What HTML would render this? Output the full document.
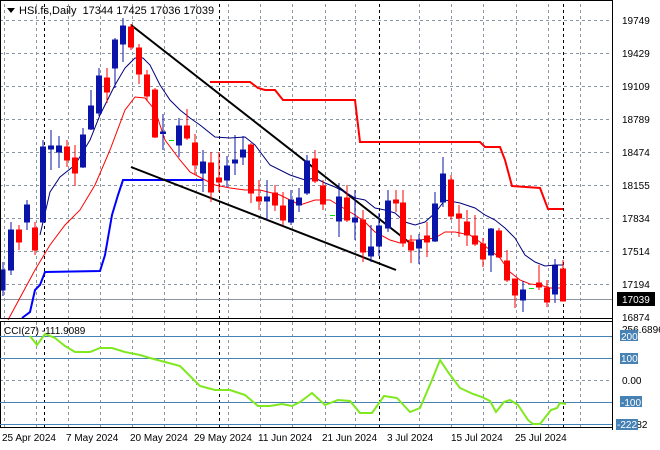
<!DOCTYPE html>
<html><head><meta charset="utf-8"><style>
html,body{margin:0;padding:0;background:#fff;}
svg{display:block;font-family:"Liberation Sans",sans-serif;}
</style></head><body>
<svg width="660" height="450" viewBox="0 0 660 450" xmlns="http://www.w3.org/2000/svg">
<rect width="660" height="450" fill="#fff"/>
<g stroke="#8a96a4" stroke-width="1" stroke-dasharray="3,3" fill="none">
<path d="M0 20.5H612M0 53.5H612M0 86.5H612M0 119.5H612M0 152.5H612M0 185.5H612M0 218.5H612M0 251.5H612M0 284.5H612"/>
<path d="M4.5 4V318M36.5 4V318M68.5 4V318M100.5 4V318M132.5 4V318M164.5 4V318M196.5 4V318M228.5 4V318M260.5 4V318M292.5 4V318M325.5 4V318M355.5 4V318M419.5 4V318M451.5 4V318M483.5 4V318M516.5 4V318M548.5 4V318M580.5 4V318"/>
<path d="M4.5 322V428M36.5 322V428M68.5 322V428M100.5 322V428M132.5 322V428M164.5 322V428M196.5 322V428M228.5 322V428M260.5 322V428M292.5 322V428M325.5 322V428M355.5 322V428M419.5 322V428M451.5 322V428M483.5 322V428M516.5 322V428M548.5 322V428M580.5 322V428"/>
<path d="M0 380.5H612"/>
</g>
<g stroke="#000" stroke-width="1" stroke-dasharray="3,3">
<path d="M44.5 4V318M219.5 4V318M379.5 4V318M563.5 4V318M44.5 322V428M219.5 322V428M379.5 322V428M563.5 322V428"/>
</g>
<line x1="0" y1="299.5" x2="612" y2="299.5" stroke="#8a96a4"/>
<polyline fill="none" stroke="#ff0000" stroke-width="2" points="210,82 250,82 258,88 265,90 275,90 283,100 355,100 360,142 480,142 485,147 500,147 505,160 512,186 540,188 548,209 563,209"/>
<polyline fill="none" stroke="#0000ff" stroke-width="2" points="22,318 30,312 35,290 40,285 45,272 100,271 105,255 112,215 118,195 123,180 203,180"/>
<line x1="131" y1="25" x2="410" y2="243" stroke="#000" stroke-width="2"/>
<line x1="131" y1="167" x2="396" y2="270" stroke="#000" stroke-width="2"/>
<polyline fill="none" stroke="#00007a" stroke-width="1" points="40,235 50,192 60,177 75,165 90,140 100,115 115,85 125,68 135,58 143,58 150,65 160,85 170,100 180,110 190,118 200,125 215,137 230,138 245,137 255,145 270,165 290,175 305,180 315,178 325,183 335,187 345,192 355,198 365,200 375,208 385,210 395,213 405,222 415,225 425,222 435,213 445,200 460,203 475,208 485,215 495,220 505,228 515,238 525,255 535,262 545,266 555,265 563,265"/>
<polyline fill="none" stroke="#ff0000" stroke-width="1" points="8,320 35,270 50,245 65,225 80,210 95,185 110,150 125,110 135,97 145,98 155,110 165,140 180,160 190,172 205,180 215,185 230,188 245,190 260,190 280,195 300,205 315,200 330,200 345,209 355,215 365,222 375,232 390,240 400,243 410,240 420,240 435,238 445,232 455,232 470,235 480,242 490,250 500,258 510,272 520,280 530,284 540,285 550,288 563,288"/>
<g stroke-width="1">
<g stroke="#0a14a8" fill="#0a14a8">
<line x1="3" y1="262" x2="3" y2="296"/><rect x="1" y="270" width="4" height="20"/>
<line x1="11" y1="222" x2="11" y2="275"/><rect x="8.5" y="230" width="5" height="40"/>
<line x1="27" y1="200" x2="27" y2="230"/><rect x="24.5" y="205" width="5" height="17"/>
<line x1="43" y1="140" x2="43" y2="222"/><rect x="40.5" y="147" width="5" height="75"/>
<line x1="51" y1="130" x2="51" y2="170"/><rect x="48.5" y="146" width="5" height="3"/>
<line x1="59" y1="136" x2="59" y2="168"/><rect x="56.5" y="146" width="5" height="6"/>
<line x1="83" y1="128" x2="83" y2="168"/><rect x="80.5" y="135" width="5" height="32"/>
<line x1="91" y1="90" x2="91" y2="130"/><rect x="88.5" y="106" width="5" height="23"/>
<line x1="99" y1="68" x2="99" y2="116"/><rect x="96.5" y="76" width="5" height="37"/>
<line x1="115" y1="38" x2="115" y2="88"/><rect x="112.5" y="40" width="5" height="28"/>
<line x1="123" y1="18" x2="123" y2="62"/><rect x="120.5" y="26" width="5" height="18"/>
<line x1="163" y1="114" x2="163" y2="150"/><rect x="160.5" y="132" width="5" height="1.5"/>
<line x1="179" y1="118" x2="179" y2="157"/><rect x="176.5" y="126" width="5" height="19"/>
<line x1="203" y1="150" x2="203" y2="192"/><rect x="200.5" y="162" width="5" height="11"/>
<line x1="227" y1="156" x2="227" y2="187"/><rect x="224.5" y="166" width="5" height="14"/>
<line x1="235" y1="135" x2="235" y2="175"/><rect x="232.5" y="160" width="5" height="3"/>
<line x1="243" y1="136" x2="243" y2="165"/><rect x="240.5" y="150" width="5" height="7"/>
<line x1="267" y1="180" x2="267" y2="220"/><rect x="264.5" y="197" width="5" height="4"/>
<line x1="291" y1="190" x2="291" y2="225"/><rect x="288.5" y="200" width="5" height="22"/>
<line x1="299" y1="188" x2="299" y2="212"/><rect x="296.5" y="198" width="5" height="7"/>
<line x1="307" y1="155" x2="307" y2="195"/><rect x="304.5" y="161" width="5" height="32"/>
<line x1="339" y1="183" x2="339" y2="237"/><rect x="336.5" y="197" width="5" height="24"/>
<line x1="355" y1="190" x2="355" y2="240"/><rect x="352.5" y="218" width="5" height="4"/>
<line x1="371" y1="225" x2="371" y2="262"/><rect x="368.5" y="247" width="5" height="9"/>
<line x1="379" y1="213" x2="379" y2="256"/><rect x="376.5" y="226" width="5" height="20"/>
<line x1="388" y1="190" x2="388" y2="232"/><rect x="385.5" y="201" width="5" height="27"/>
<line x1="419" y1="234" x2="419" y2="264"/><rect x="416.5" y="240" width="5" height="8"/>
<line x1="435" y1="192" x2="435" y2="242"/><rect x="432.5" y="204" width="5" height="37"/>
<line x1="443" y1="157" x2="443" y2="207"/><rect x="440.5" y="174" width="5" height="28"/>
<line x1="491" y1="228" x2="491" y2="272"/><rect x="488.5" y="229" width="5" height="26"/>
<line x1="523" y1="281" x2="523" y2="312"/><rect x="520.5" y="290" width="5" height="10"/>
<line x1="555" y1="259" x2="555" y2="303"/><rect x="552.5" y="266" width="5" height="28"/>
</g>
<g stroke="#ff0000" fill="#ff0000">
<line x1="19" y1="225" x2="19" y2="250"/><rect x="16.5" y="230" width="5" height="12"/>
<line x1="35" y1="222" x2="35" y2="255"/><rect x="32.5" y="228" width="5" height="22"/>
<line x1="67" y1="140" x2="67" y2="167"/><rect x="64.5" y="147" width="5" height="13"/>
<line x1="75" y1="145" x2="75" y2="186"/><rect x="72.5" y="158" width="5" height="15"/>
<line x1="107" y1="68" x2="107" y2="103"/><rect x="104.5" y="78" width="5" height="14"/>
<line x1="131" y1="24" x2="131" y2="50"/><rect x="128.5" y="27" width="5" height="20"/>
<line x1="139" y1="44" x2="139" y2="84"/><rect x="136.5" y="48" width="5" height="26"/>
<line x1="147" y1="70" x2="147" y2="100"/><rect x="144.5" y="75" width="5" height="21"/>
<line x1="155" y1="88" x2="155" y2="138"/><rect x="152.5" y="90" width="5" height="47"/>
<line x1="187" y1="109" x2="187" y2="140"/><rect x="184.5" y="126" width="5" height="12"/>
<line x1="195" y1="134" x2="195" y2="175"/><rect x="192.5" y="143" width="5" height="22"/>
<line x1="211" y1="152" x2="211" y2="202"/><rect x="208.5" y="163" width="5" height="29"/>
<line x1="219" y1="152" x2="219" y2="192"/><rect x="216.5" y="178" width="5" height="4"/>
<line x1="251" y1="143" x2="251" y2="203"/><rect x="248.5" y="145" width="5" height="48"/>
<line x1="259" y1="180" x2="259" y2="210"/><rect x="256.5" y="197" width="5" height="4"/>
<line x1="275" y1="185" x2="275" y2="211"/><rect x="272.5" y="193" width="5" height="12"/>
<line x1="283" y1="192" x2="283" y2="225"/><rect x="280.5" y="206" width="5" height="14"/>
<line x1="315" y1="150" x2="315" y2="183"/><rect x="312.5" y="159" width="5" height="22"/>
<line x1="323" y1="180" x2="323" y2="210"/><rect x="320.5" y="186" width="5" height="18"/>
<line x1="347" y1="185" x2="347" y2="222"/><rect x="344.5" y="198" width="5" height="22"/>
<line x1="363" y1="210" x2="363" y2="262"/><rect x="360.5" y="220" width="5" height="32"/>
<line x1="396" y1="190" x2="396" y2="212"/><rect x="393.5" y="200" width="5" height="3"/>
<line x1="403" y1="190" x2="403" y2="247"/><rect x="400.5" y="203" width="5" height="40"/>
<line x1="411" y1="235" x2="411" y2="263"/><rect x="408.5" y="242" width="5" height="8"/>
<line x1="427" y1="222" x2="427" y2="257"/><rect x="424.5" y="236" width="5" height="6"/>
<line x1="451" y1="175" x2="451" y2="220"/><rect x="448.5" y="180" width="5" height="36"/>
<line x1="459" y1="205" x2="459" y2="237"/><rect x="456.5" y="214" width="5" height="4"/>
<line x1="467" y1="210" x2="467" y2="246"/><rect x="464.5" y="222" width="5" height="13"/>
<line x1="475" y1="215" x2="475" y2="246"/><rect x="472.5" y="236" width="5" height="8"/>
<line x1="483" y1="238" x2="483" y2="267"/><rect x="480.5" y="244" width="5" height="15"/>
<line x1="499" y1="228" x2="499" y2="258"/><rect x="496.5" y="231" width="5" height="26"/>
<line x1="507" y1="250" x2="507" y2="282"/><rect x="504.5" y="261" width="5" height="19"/>
<line x1="515" y1="279" x2="515" y2="308"/><rect x="512.5" y="279" width="5" height="16"/>
<line x1="539" y1="265" x2="539" y2="290"/><rect x="536.5" y="283" width="5" height="4"/>
<line x1="547" y1="280" x2="547" y2="307"/><rect x="544.5" y="288" width="5" height="14"/>
<line x1="563" y1="260" x2="563" y2="301"/><rect x="560.5" y="269" width="5" height="32"/>
</g>
<g stroke="#00e000"><line x1="169" y1="140.5" x2="174" y2="140.5"/><line x1="330" y1="215.5" x2="335" y2="215.5"/><line x1="529" y1="288.5" x2="534" y2="288.5"/></g>
</g>
<rect x="0.5" y="0.5" width="612" height="318" fill="none" stroke="#000"/>
<rect x="0.5" y="321.5" width="612" height="106" fill="none" stroke="#000"/>
<line x1="612.5" y1="0" x2="612.5" y2="430" stroke="#000"/>
<path d="M7 8h8l-4 5z" fill="#000"/>
<text x="19" y="14" font-size="11" fill="#000">HSI.fs,Daily&#160;&#160;17344 17425 17036 17039</text>
<g font-size="10" fill="#000">
<text x="622" y="24">19749</text><text x="622" y="57">19429</text><text x="622" y="90">19109</text>
<text x="622" y="123">18789</text><text x="622" y="156">18474</text><text x="622" y="189">18155</text>
<text x="622" y="222">17834</text><text x="622" y="255">17514</text><text x="622" y="288">17194</text>
<text x="622" y="321">16874</text>
</g>
<rect x="617" y="292" width="38" height="14" fill="#000"/>
<text x="622" y="303" font-size="10" fill="#fff">17039</text>
<g stroke="#4682b4" stroke-width="1">
<line x1="0" y1="336.5" x2="612" y2="336.5"/><line x1="0" y1="358.5" x2="612" y2="358.5"/>
<line x1="0" y1="402.5" x2="612" y2="402.5"/><line x1="0" y1="424.5" x2="612" y2="424.5"/>
</g>
<polyline fill="none" stroke="#7fe81e" stroke-width="2" points="30,336 37,345 45,334 55,338 65,346 75,352 90,352 100,348 112,348 125,352 140,355 150,358 165,362 180,366 190,376 200,386 215,390 230,390 245,395 258,406 270,406 282,404 292,406 300,402 312,393 325,405 338,400 350,401 360,413 372,413 384,396 397,398 410,412 420,408 432,380 440,360 448,372 460,388 473,394 482,397 490,401 496,412 504,402 510,400 518,405 528,420 533,424 540,424 551,410 557,408 560,403 566,404"/>
<g font-size="10" fill="#000">
<text x="4" y="334">CCI(27) -111.9089</text>
<text x="622" y="333">256.6896</text>
<text x="622" y="384">0.00</text>
<text x="628" y="428">.582</text>
</g>
<g font-size="10">
<rect x="620" y="330" width="18" height="11" fill="#4682b4"/><text x="621" y="340" fill="#fff">200</text>
<rect x="620" y="353" width="18" height="11" fill="#4682b4"/><text x="621" y="362" fill="#fff">100</text>
<rect x="620" y="396" width="22" height="11" fill="#4682b4"/><text x="621" y="406" fill="#fff">-100</text>
<rect x="616" y="419" width="22" height="11" fill="#4682b4"/><text x="617" y="428" fill="#fff">-222</text>
</g>
<g font-size="10" fill="#000">
<text x="2" y="441">25 Apr 2024</text><text x="66" y="441">7 May 2024</text><text x="130" y="441">20 May 2024</text>
<text x="194" y="441">29 May 2024</text><text x="258" y="441">11 Jun 2024</text><text x="322" y="441">21 Jun 2024</text>
<text x="387" y="441">3 Jul 2024</text><text x="451" y="441">15 Jul 2024</text><text x="515" y="441">25 Jul 2024</text>
</g>
</svg>
</body></html>
